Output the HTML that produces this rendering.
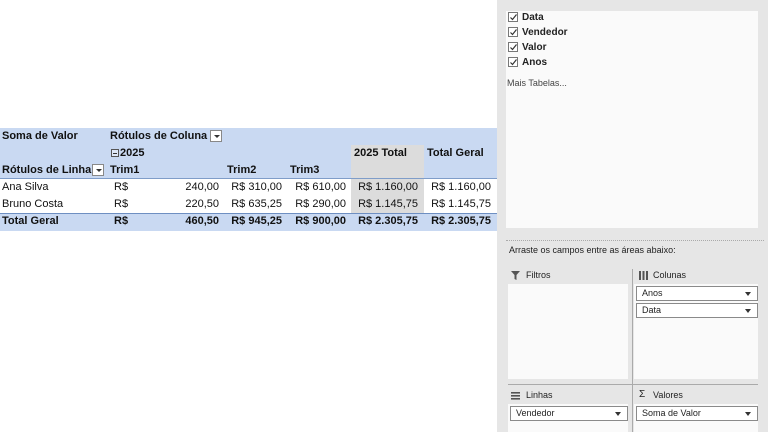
<!DOCTYPE html>
<html><head><meta charset="utf-8"><style>
*{margin:0;padding:0;box-sizing:border-box}
body{width:768px;height:432px;overflow:hidden;background:#fff;font-family:"Liberation Sans",sans-serif;position:relative;color:#111}
.a{position:absolute;white-space:nowrap}
.b{font-weight:bold;font-size:11px;color:#111}
.r{text-align:right}
.n{font-size:11px;color:#111}
.dd{position:absolute;width:12px;height:12px;border:1px solid #888;background:#fff}
.dd:after{content:"";position:absolute;left:3px;top:4px;border-left:3px solid transparent;border-right:3px solid transparent;border-top:3px solid #333}
.cb{position:absolute;left:508px;width:10px;height:10px;border:1px solid #777;background:#fff}
.cb svg{position:absolute;left:0;top:0}
.fl{position:absolute;font-size:10px;font-weight:bold;color:#222;left:522px}
.box{position:absolute;background:#fff;border:1px solid #8a8a8a;height:15px;font-size:9.5px;color:#222;padding:1px 0 0 5px}
.box:after{content:"";position:absolute;right:6px;top:5px;border-left:3px solid transparent;border-right:3px solid transparent;border-top:4px solid #333}
.lab{position:absolute;font-size:9.5px;color:#222}
</style></head><body>
<div class="a" style="left:0;top:128px;width:497px;height:51px;background:#c9d9f2"></div>
<div class="a" style="left:351px;top:145px;width:73px;height:68px;background:#dcdcdc"></div>
<div class="a" style="left:0;top:179px;width:351px;height:34px;background:#fff"></div>
<div class="a" style="left:424px;top:179px;width:73px;height:34px;background:#fff"></div>
<div class="a" style="left:0;top:178px;width:497px;height:1px;background:#7f9dc9"></div>
<div class="a" style="left:0;top:213px;width:497px;height:18px;background:#c9d9f2"></div>
<div class="a" style="left:0;top:213px;width:497px;height:1px;background:#6e8fc2"></div>

<div class="a b" style="left:2px;top:130px">Soma de Valor</div>
<div class="a b" style="left:110px;top:130px">Rótulos de Coluna</div>
<div class="dd" style="left:210px;top:130px"></div>
<div class="a" style="left:111px;top:149px;width:8px;height:8px;border:1px solid #555;background:#dfe8f7"></div>
<div class="a" style="left:113px;top:153px;width:4px;height:1px;background:#333"></div>
<div class="a b" style="left:120px;top:147px">2025</div>
<div class="a b" style="left:354px;top:147px">2025 Total</div>
<div class="a b" style="left:427px;top:147px">Total Geral</div>
<div class="a b" style="left:2px;top:164px">Rótulos de Linha</div>
<div class="dd" style="left:92px;top:164px"></div>
<div class="a b" style="left:110px;top:164px">Trim1</div>
<div class="a b" style="left:227px;top:164px">Trim2</div>
<div class="a b" style="left:290px;top:164px">Trim3</div>

<div class="a n" style="left:2px;top:181px">Ana Silva</div>
<div class="a n" style="left:114px;top:181px">R$</div>
<div class="a n r" style="left:150px;width:69px;top:181px">240,00</div>
<div class="a n r" style="left:220px;width:62px;top:181px">R$ 310,00</div>
<div class="a n r" style="left:284px;width:62px;top:181px">R$ 610,00</div>
<div class="a n r" style="left:350px;width:68px;top:181px">R$ 1.160,00</div>
<div class="a n r" style="left:424px;width:67px;top:181px">R$ 1.160,00</div>

<div class="a n" style="left:2px;top:198px">Bruno Costa</div>
<div class="a n" style="left:114px;top:198px">R$</div>
<div class="a n r" style="left:150px;width:69px;top:198px">220,50</div>
<div class="a n r" style="left:220px;width:62px;top:198px">R$ 635,25</div>
<div class="a n r" style="left:284px;width:62px;top:198px">R$ 290,00</div>
<div class="a n r" style="left:350px;width:68px;top:198px">R$ 1.145,75</div>
<div class="a n r" style="left:424px;width:67px;top:198px">R$ 1.145,75</div>

<div class="a b" style="left:2px;top:215px">Total Geral</div>
<div class="a b" style="left:114px;top:215px">R$</div>
<div class="a b r" style="left:150px;width:69px;top:215px">460,50</div>
<div class="a b r" style="left:220px;width:62px;top:215px">R$ 945,25</div>
<div class="a b r" style="left:284px;width:62px;top:215px">R$ 900,00</div>
<div class="a b r" style="left:350px;width:68px;top:215px">R$ 2.305,75</div>
<div class="a b r" style="left:424px;width:67px;top:215px">R$ 2.305,75</div>

<div class="a" style="left:497px;top:0;width:271px;height:432px;background:#e6e6e6"></div>
<div class="a" style="left:506px;top:11px;width:252px;height:217px;background:#fafafa"></div>
<div class="cb" style="top:12px"><svg width="9" height="9"><path d="M1.5 4.5 L3.5 6.5 L7.5 1.5" stroke="#333" stroke-width="1.2" fill="none"/></svg></div>
<div class="fl" style="top:12px">Data</div>
<div class="cb" style="top:27px"><svg width="9" height="9"><path d="M1.5 4.5 L3.5 6.5 L7.5 1.5" stroke="#333" stroke-width="1.2" fill="none"/></svg></div>
<div class="fl" style="top:27px">Vendedor</div>
<div class="cb" style="top:42px"><svg width="9" height="9"><path d="M1.5 4.5 L3.5 6.5 L7.5 1.5" stroke="#333" stroke-width="1.2" fill="none"/></svg></div>
<div class="fl" style="top:42px">Valor</div>
<div class="cb" style="top:57px"><svg width="9" height="9"><path d="M1.5 4.5 L3.5 6.5 L7.5 1.5" stroke="#333" stroke-width="1.2" fill="none"/></svg></div>
<div class="fl" style="top:57px">Anos</div>
<div class="lab" style="left:507px;top:78px;color:#444;font-size:9px">Mais Tabelas...</div>

<div class="a" style="left:506px;top:240px;width:258px;border-top:1px dotted #aaa"></div>
<div class="lab" style="left:509px;top:245px;font-size:9px">Arraste os campos entre as áreas abaixo:</div>

<div class="a" style="left:632px;top:269px;width:1px;height:163px;background:#aaa"></div>
<div class="a" style="left:508px;top:384px;width:250px;height:1px;background:#aaa"></div>

<svg class="a" style="left:511px;top:271px" width="9" height="9"><path d="M0 0H9L5.5 4V9L3.5 8V4Z" fill="#555"/></svg>
<div class="lab" style="left:526px;top:270px;font-size:9px">Filtros</div>
<div class="a" style="left:508px;top:284px;width:120px;height:95px;background:#fafafa"></div>

<svg class="a" style="left:639px;top:271px" width="9" height="9"><rect x="0" y="0" width="2" height="9" fill="#555"/><rect x="3.5" y="0" width="2" height="9" fill="#555"/><rect x="7" y="0" width="2" height="9" fill="#555"/></svg>
<div class="lab" style="left:653px;top:270px;font-size:9px">Colunas</div>
<div class="a" style="left:634px;top:284px;width:124px;height:95px;background:#fafafa"></div>
<div class="box" style="left:636px;top:286px;width:122px;font-size:9px">Anos</div>
<div class="box" style="left:636px;top:303px;width:122px;font-size:9px">Data</div>

<svg class="a" style="left:511px;top:392px" width="9" height="8"><rect y="0" width="9" height="1.6" fill="#555"/><rect y="3" width="9" height="1.6" fill="#555"/><rect y="6" width="9" height="1.6" fill="#555"/></svg>
<div class="lab" style="left:526px;top:390px;font-size:9px">Linhas</div>
<div class="lab" style="left:639px;top:389px;font-size:10px">Σ</div>
<div class="lab" style="left:653px;top:390px;font-size:9px">Valores</div>
<div class="a" style="left:508px;top:404px;width:120px;height:28px;background:#fafafa"></div>
<div class="a" style="left:634px;top:404px;width:124px;height:28px;background:#fafafa"></div>
<div class="box" style="left:510px;top:406px;width:118px;font-size:9px">Vendedor</div>
<div class="box" style="left:636px;top:406px;width:122px;font-size:9px">Soma de Valor</div>
</body></html>
